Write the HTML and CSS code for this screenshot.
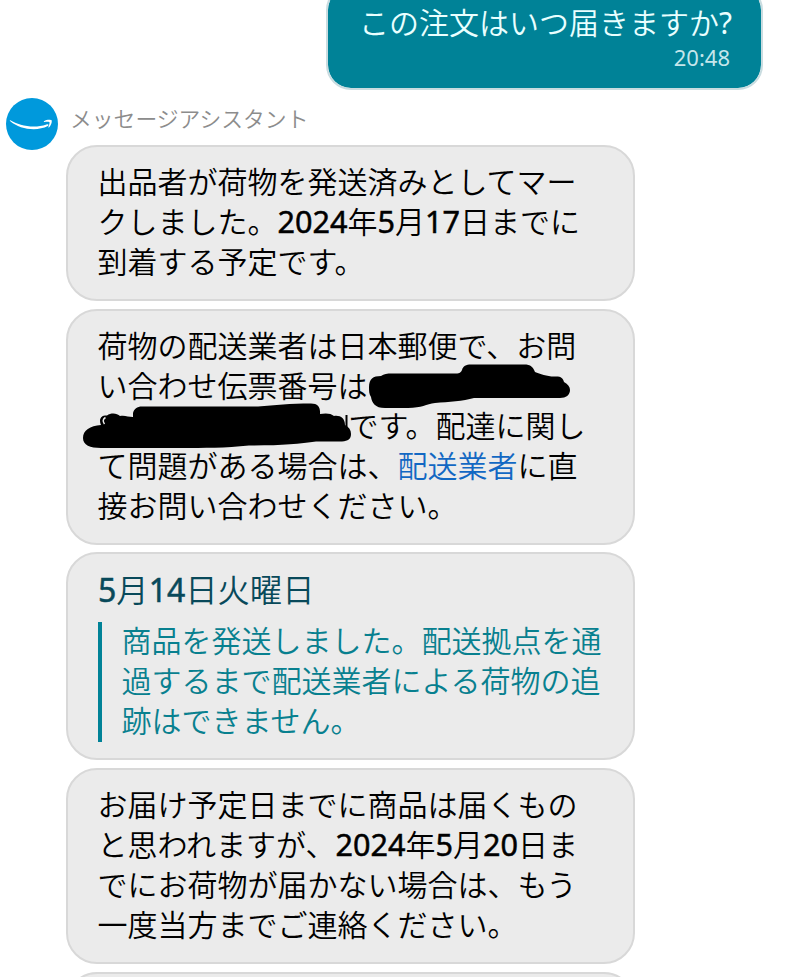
FILE: index.html
```html
<!DOCTYPE html>
<html lang="ja">
<head>
    <meta charset="UTF-8">
    <meta name="viewport" content="width=device-width, initial-scale=1.0">
    <title>メッセージアシスタント</title>
    <link rel="stylesheet" href="styles.css">
</head>
<body>
    <div class="chat">
        <div class="bubble user">
            <p>この注文はいつ届きますか<b>?</b></p>
            <span class="time">20:48</span>
        </div>

        <div class="assistant">
            <svg class="avatar" viewBox="0 0 52 52">
                <circle cx="26" cy="26" r="26" fill="#0099dc"/>
                <path d="M4.3 22.2C13 27 27 31.200 40.500 26.400C42.300 25.700 43.300 27 41.800 28C31 33.600 14 31.600 4 22.900C3.6 22.400 3.9 22 4.3 22.2Z" fill="#fff"/>
                <path d="M38 23.200C40.500 21.500 45 21.500 45.700 22.400C46.200 23.700 45 27.500 43 29.400C42.500 29.800 42.200 29.500 42.400 29C43.100 27.400 44 24.800 43.400 24.100C42.700 23.400 40 23.600 38.400 23.900C37.800 24 37.700 23.500 38 23.200Z" fill="#fff"/>
            </svg>
            <div class="messages">
                <div class="name">メッセージアシスタント</div>
                <div class="bubble">
                    <p>出品者が荷物を発送済みとしてマー<br>クしました。<b>2024</b>年<b>5</b>月<b>17</b>日までに<br>到着する予定です。</p>
                </div>
                <div class="bubble">
                    <p>荷物の配送業者は日本郵便で、お問<br>い合わせ伝票番号は<br><span class="hidden-number"></span>です。配達に関し<br>て問題がある場合は、<a href="#">配送業者</a>に直<br>接お問い合わせください。</p>
                    <!-- marker strokes over the tracking number -->
                    <svg class="marker" viewBox="66 309 569 236">
                        <path d="M369 387C369 379 373 376 381 376C384 374 387 373.500 392 373.500L456 373.500C460 373.500 461 372 462 370C463 366 466 364.500 471 364.500L524 364.500C531 364.500 533 367 535 372C540 374 547 376.500 554 376.500C561 376 563 378 564 382C568 384 570 387 570 390C570 395 566 398 560 398L474 398C463 401 449 402 435 403C426 404 422 408 408 408L385 408C375 408 372 403 371 397C369 394 369 391 369 387Z"/>
                        <path d="M83 438C83 430 90 426 101 425C99 421 100 416 105 415.500L107 415.500C111 412.500 117 413 120 416C125 415 128 417 133 417L133 413C134 409 137 406.500 142 406.500L258 406.500C275 405 290 403.500 311 403.500C318 403.500 320.500 407 320 414C325 413 331 413 334 416C340 415 345 418 345 425C349 427 351 430 351 434C351 439 348 441 342 441.500L316 441.500C300 444 280 445.500 249 445.500C225 448 205 448 180 448L101 448C90 448 83 445 83 438Z"/>
                        <path class="gap" d="M105.500 417.500Q101.500 420 104.500 424"/>
                        <path class="edge" d="M346.500 415V428"/>
                    </svg>
                </div>
                <div class="bubble status">
                    <h2><b>5</b>月<b>14</b>日火曜日</h2>
                    <blockquote><p>商品を発送しました。配送拠点を通<br>過するまで配送業者による荷物の追<br>跡はできません。</p></blockquote>
                </div>
                <div class="bubble">
                    <p>お届け予定日までに商品は届くもの<br>と思われますが、<b>2024</b>年<b>5</b>月<b>20</b>日ま<br>でにお荷物が届かない場合は、もう<br>一度当方までご連絡ください。</p>
                </div>
                <div class="bubble next"></div>
            </div>
        </div>
    </div>
</body>
</html>
```
FILE: styles.css
```css
* {
    box-sizing: border-box;
}
body {
    margin: 0;
    height: 977px;
    overflow: hidden;
    background: #fff;
    font-family: 'Noto Sans', 'Noto Sans CJK JP', sans-serif;
    font-size: 30px;
    font-weight: 350;
    line-height: 40px;
    color: #000;
}
p, h2, blockquote {
    margin: 0;
    font-size: 30px;
    font-weight: 350;
    white-space: nowrap;
}
b {
    font-size: 30.6px;
    font-weight: 400;
    line-height: 1;
    -webkit-text-stroke: 0.5px;
}
a {
    color: #1268c3;
    text-decoration: none;
}
.chat {
    display: flex;
    flex-direction: column;
    height: 992px;
    margin-top: -15px;
    overflow: hidden;
}
.bubble {
    position: relative;
    flex: none;
    width: 569px;
    padding: 15px 30px 17px 29.5px;
    border: 2px solid #d8d8d8;
    border-radius: 31px;
    background: #ebebeb;
}
.user {
    align-self: flex-end;
    width: 437px;
    height: 105px;
    margin-right: 36px;
    padding: 16px 31px 14px;
    border-color: #c9dce0;
    border-radius: 25px;
    background: #008297;
    background-clip: padding-box;
    color: #e9ffff;
    text-align: right;
}
.user p {
    padding-right: 2.5px;
}
.user b {
    font-size: 30px;
    -webkit-text-stroke: 0;
}
.time {
    display: block;
    font-size: 22px;
    font-weight: 400;
    line-height: 29px;
    color: #c5e6eb;
}
.assistant {
    display: flex;
    gap: 8px;
    padding: 8px 0 0 6px;
}
.avatar {
    flex: none;
    width: 52px;
    height: 52px;
}
.messages {
    display: flex;
    flex-direction: column;
    gap: 8px;
}
.name {
    height: 39px;
    padding-left: 4px;
    font-size: 21.8px;
    line-height: 41px;
    color: #8c8c8c;
}
.hidden-number {
    display: inline-block;
    width: 251px;
}
.marker {
    position: absolute;
    top: -2px;
    left: -2px;
    width: 569px;
    height: 236px;
}
.gap {
    fill: none;
    stroke: #ebebeb;
    stroke-width: 1.5;
}
.edge {
    stroke: #000;
    stroke-width: 2;
}
.status {
    margin-top: -1px;
    padding: 15px 30px 16px;
}
h2 {
    margin-bottom: 13px;
    font-size: 32.3px;
    color: #08495a;
}
h2 b {
    font-size: 32px;
}
blockquote {
    display: flow-root;
    height: 120px;
    padding-left: 19.5px;
    border-left: 4px solid #008297;
    color: #08808f;
}
blockquote p {
    margin-top: -1px;
}
.next {
    height: 80px;
}
```
